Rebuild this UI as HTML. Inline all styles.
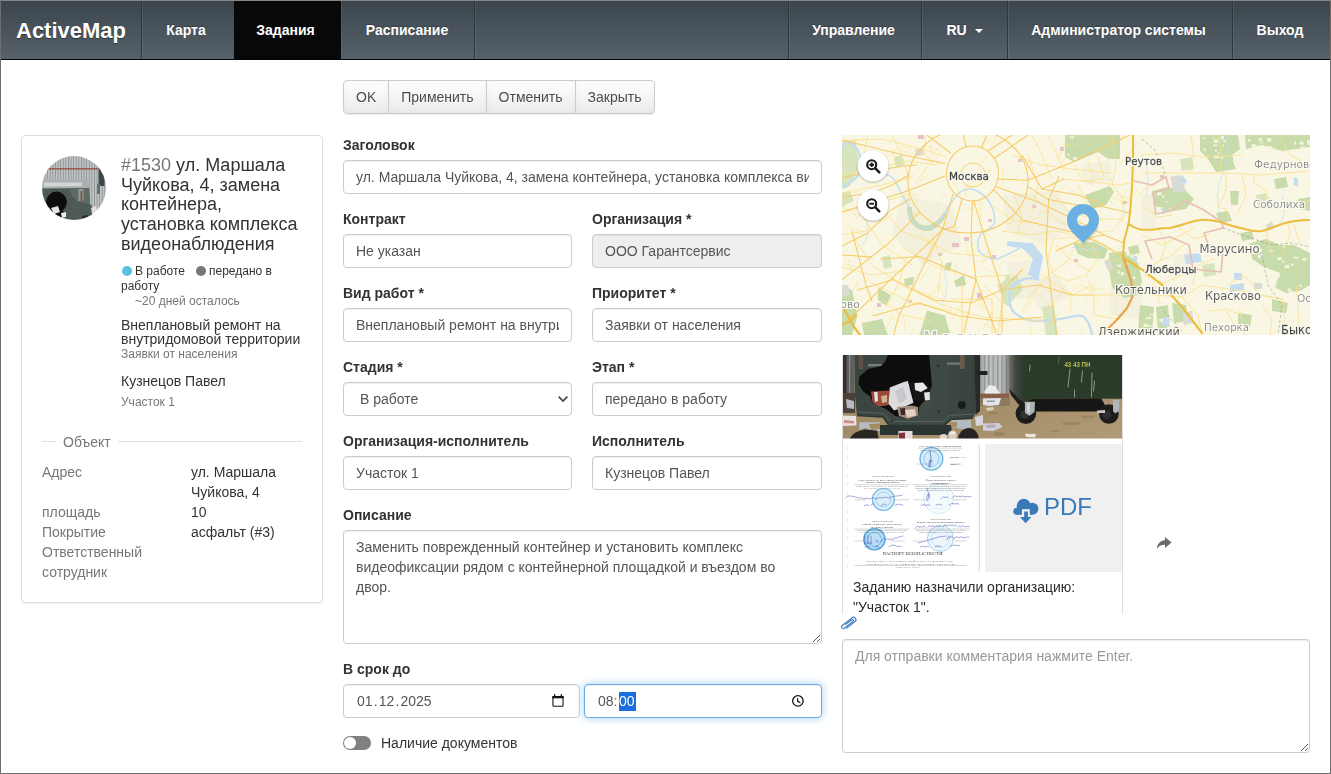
<!DOCTYPE html>
<html lang="ru">
<head>
<meta charset="utf-8">
<title>ActiveMap</title>
<style>
*{box-sizing:border-box}
html,body{margin:0;padding:0}
body{width:1331px;height:774px;overflow:hidden;position:relative;background:#fff;font-family:"Liberation Sans",sans-serif;font-size:14px;line-height:20px;color:#333}
.abs{position:absolute}
#frame{position:absolute;left:0;top:0;width:1331px;height:774px;border:1px solid #6e6e6e;border-top-color:#858585;pointer-events:none;z-index:100}
/* navbar */
#nav{position:absolute;left:1px;top:1px;width:1329px;height:59px;background:linear-gradient(#3b454c,#56626a);border-bottom:1px solid #050505}
#nav .it{position:absolute;top:0;height:58px;line-height:59px;color:#fff;font-weight:bold;font-size:14px;text-align:center;border-left:1px solid #2f373d;box-shadow:inset 1px 0 0 rgba(255,255,255,.08);text-shadow:0 -1px 0 rgba(0,0,0,.25);white-space:nowrap}
#nav .brand{position:absolute;left:0;top:0;height:58px;line-height:59px;width:140px;color:#fff;font-weight:bold;font-size:22px;padding-left:15px;text-shadow:0 1px 1px rgba(0,0,0,.4)}
#nav .act{background:#080808;box-shadow:none;border-left-color:#080808}
.caret{display:inline-block;width:0;height:0;margin-left:4px;vertical-align:middle;border-top:4px solid #fff;border-right:4px solid transparent;border-left:4px solid transparent}
/* buttons */
.btns{position:absolute;left:343px;top:80px;height:34px;display:flex;border-radius:4px;box-shadow:0 1px 1px rgba(0,0,0,.075)}
.btn{height:34px;line-height:32px;padding:0 12px;border:1px solid #ccc;margin-left:-1px;background:linear-gradient(#fff,#ebebeb);color:#4a4a4a;font-size:14px;text-shadow:0 1px 0 #fff;box-shadow:inset 0 0 6px rgba(0,0,0,.035)}
.btn:first-child{margin-left:0;border-radius:4px 0 0 4px}
.btn:last-child{border-radius:0 4px 4px 0;padding-right:13px}
/* form */
label.l{position:absolute;font-weight:bold;font-size:14px;line-height:20px;color:#333;white-space:nowrap}
.inp{position:absolute;height:34px;border:1px solid #ccc;border-radius:4px;background:#fff;box-shadow:inset 0 1px 1px rgba(0,0,0,.075);padding:0 12px;line-height:32px;font-size:14px;color:#555;white-space:nowrap;overflow:hidden}
.inp.dis{background:#eee}

/* left panel */
#lp{position:absolute;left:21px;top:135px;width:302px;height:468px;border:1px solid #ddd;border-radius:4px;box-shadow:0 1px 1px rgba(0,0,0,.05);background:#fff}
#lp .t{position:absolute;white-space:nowrap}
#lp h4{position:absolute;left:99px;top:19.6px;width:200px;white-space:nowrap;margin:0;font-size:18px;line-height:19.8px;font-weight:normal;color:#333}
#lp h4 span{color:#777}
.s12{font-size:12px;line-height:14px}
.s14{font-size:14px;line-height:20px}
.g{color:#777}
.dot{position:absolute;width:10px;height:10px;border-radius:50%}
.inp.foc{border-color:#66afe9;box-shadow:inset 0 1px 1px rgba(0,0,0,.075),0 0 8px rgba(102,175,233,.6)}
.sel{background:#1a6fe0;color:#fff;display:inline-block;line-height:19px;height:19px;margin-left:1.5px;padding-right:1.5px;vertical-align:baseline}
.dt{padding:0 1.15px}
.clip{overflow:hidden;white-space:nowrap;height:32px}
#main{position:absolute;left:0;top:0;width:1331px;height:774px;will-change:transform}
#lp .h4{left:99px;font-size:18px;line-height:20px;color:#333}
</style>
</head>
<body>
<div id="nav">
  <div class="brand">ActiveMap</div>
  <div class="it" style="left:140px;width:93px;padding-right:4px">Карта</div>
  <div class="it act" style="left:233px;width:107px;padding-right:5px">Задания</div>
  <div class="it" style="left:340px;width:134px;border-left:none;padding-right:2px">Расписание</div>
  <div class="it" style="left:473px;width:314px"></div>
  <div class="it" style="left:787px;width:133px;padding-right:3px">Управление</div>
  <div class="it" style="left:920px;width:86px">RU <span class="caret"></span></div>
  <div class="it" style="left:1006px;width:225px;padding-right:3px">Администратор системы</div>
  <div class="it" style="left:1231px;width:98px;padding-right:3px">Выход</div>
</div>

<div id="main">
<div class="btns"><div class="btn">OK</div><div class="btn">Применить</div><div class="btn">Отменить</div><div class="btn">Закрыть</div></div>

<div id="lp">
  <svg class="abs" style="left:20px;top:20px" width="64" height="64" viewBox="0 0 64 64"><defs><clipPath id="avc"><circle cx="32" cy="32" r="32"/></clipPath><filter id="avb" x="-5%" y="-5%" width="110%" height="110%"><feGaussianBlur stdDeviation="0.550"/></filter><pattern id="avf" width="2.600" height="8" patternUnits="userSpaceOnUse"><rect width="2.600" height="8" fill="#c0c3c4"/><rect width="0.900" height="8" fill="#8f9496"/></pattern></defs><g clip-path="url(#avc)"><g filter="url(#avb)"><rect x="-2" y="-2" width="68" height="68" fill="url(#avf)"/><rect x="4" y="12" width="52" height="1.600" fill="#9a5c57"/><rect x="56.500" y="10" width="6" height="20" fill="#3d4649"/><rect x="55" y="28" width="3" height="10" fill="#6b7174"/><path d="M-2 23 L46 23 L47 32 L-2 33z" fill="#aab1b1"/><path d="M2 26.500 L40 26.500 L40 30 L2 30.500z" fill="#d2d6d6"/><path d="M-2 32.500 L47 32 L48 48 L50 50 L50 66 L-2 66z" fill="#4d5a56"/><path d="M28 33 L47 32 L48 48 L36 46 L30 40z" fill="#5d6a66"/><rect x="36.500" y="33" width="5" height="12" fill="#9b9a92"/><rect x="38.500" y="35" width="1.800" height="12" fill="#6e5a4e"/><circle cx="14.500" cy="46" r="10.400" fill="#0e0e0e"/><path d="M8 50 L18 52 L24 58 L22 64 L6 60z" fill="#111"/><path d="M9 52 L16 50 L18 56 L12 58z" fill="#e4e4e4"/><path d="M19 57 L24 56 L24 61 L20 62z" fill="#ececec"/><path d="M49 52 L54 50 L56 56 L50 58z" fill="#e6dcd8"/><path d="M40 60 L46 59 L46 63 L40 64z" fill="#2a2f2e"/></g></g></svg>
  <div class="t h4" style="top:19px"><span class="g">#1530</span> ул. Маршала</div>
  <div class="t h4" style="top:39px">Чуйкова, 4, замена</div>
  <div class="t h4" style="top:58px">контейнера,</div>
  <div class="t h4" style="top:78px">установка комплекса</div>
  <div class="t h4" style="top:98px">видеонаблюдения</div>
  <div class="dot" style="left:100px;top:130px;background:#5bc0de"></div>
  <div class="t s12" style="left:113px;top:128px">В работе</div>
  <div class="dot" style="left:174px;top:130px;background:#777"></div>
  <div class="t s12" style="left:187px;top:128px">передано в</div>
  <div class="t s12" style="left:99px;top:143px">работу</div>
  <div class="t s12 g" style="left:113px;top:158px">~20 дней осталось</div>
  <div class="t s14" style="left:99px;top:182px;line-height:14px">Внеплановый ремонт на</div>
  <div class="t s14" style="left:99px;top:196px;line-height:14px">внутридомовой территории</div>
  <div class="t s12 g" style="left:99px;top:211px">Заявки от населения</div>
  <div class="t s14" style="left:99px;top:235px">Кузнецов Павел</div>
  <div class="t s12 g" style="left:99px;top:259px">Участок 1</div>
  <div class="abs" style="left:20px;top:305px;width:14px;height:1px;background:#e0e0e0"></div>
  <div class="abs" style="left:96px;top:305px;width:184px;height:1px;background:#e0e0e0"></div>
  <div class="t g" style="left:41px;top:296px;font-size:14px;line-height:20px">Объект</div>
  <div class="t s14 g" style="left:20px;top:326px">Адрес</div>
  <div class="t s14" style="left:169px;top:326px">ул. Маршала</div>
  <div class="t s14" style="left:169px;top:346px">Чуйкова, 4</div>
  <div class="t s14 g" style="left:20px;top:366px">площадь</div>
  <div class="t s14" style="left:169px;top:366px">10</div>
  <div class="t s14 g" style="left:20px;top:386px">Покрытие</div>
  <div class="t s14" style="left:169px;top:386px">асфальт (#3)</div>
  <div class="t s14 g" style="left:20px;top:406px">Ответственный</div>
  <div class="t s14 g" style="left:20px;top:426px">сотрудник</div>
</div>

<label class="l" style="left:343px;top:135px">Заголовок</label>
<div class="inp" style="left:343px;top:160px;width:479px"><div class="clip">ул. Маршала Чуйкова, 4, замена контейнера, установка комплекса видеонаблюдения</div></div>
<label class="l" style="left:343px;top:209px">Контракт</label>
<div class="inp" style="left:343px;top:234px;width:229px">Не указан</div>
<label class="l" style="left:592px;top:209px">Организация *</label>
<div class="inp dis" style="left:592px;top:234px;width:230px">ООО Гарантсервис</div>
<label class="l" style="left:343px;top:283px">Вид работ *</label>
<div class="inp" style="left:343px;top:308px;width:229px"><div class="clip">Внеплановый ремонт на внутридомовой территории</div></div>
<label class="l" style="left:592px;top:283px">Приоритет *</label>
<div class="inp" style="left:592px;top:308px;width:230px">Заявки от населения</div>
<label class="l" style="left:343px;top:357px">Стадия *</label>
<div class="inp" style="left:343px;top:382px;width:229px;padding-left:16px">В работе<svg class="abs" style="right:2.5px;top:11px" width="12" height="10" viewBox="0 0 12 10"><path d="M1.700 2.700 L6 7 L10.300 2.700" fill="none" stroke="#444" stroke-width="1.700"/></svg></div>
<label class="l" style="left:592px;top:357px">Этап *</label>
<div class="inp" style="left:592px;top:382px;width:230px">передано в работу</div>
<label class="l" style="left:343px;top:431px">Организация-исполнитель</label>
<div class="inp" style="left:343px;top:456px;width:229px">Участок 1</div>
<label class="l" style="left:592px;top:431px">Исполнитель</label>
<div class="inp" style="left:592px;top:456px;width:230px">Кузнецов Павел</div>
<label class="l" style="left:343px;top:505px">Описание</label>
<div class="inp" style="left:343px;top:530px;width:479px;height:114px;line-height:20px;padding:6px 12px;white-space:normal">Заменить поврежденный контейнер и установить комплекс<br>видеофиксации рядом с контейнерной площадкой и въездом во<br>двор.<svg class="abs" style="right:0;bottom:0" width="11" height="11" viewBox="0 0 11 11"><path d="M10 3 L3 10 M10 7 L7 10" stroke="#555" stroke-width="1" fill="none"/></svg></div>
<label class="l" style="left:343px;top:659px">В срок до</label>
<div class="inp" style="left:343px;top:684px;width:237px;padding-left:13px">01<span class="dt">.</span>12<span class="dt">.</span>2025<svg class="abs" style="left:208px;top:9px" width="12" height="14" viewBox="0 0 12 14"><rect x="0.950" y="2.500" width="10.100" height="9.800" rx="0.800" fill="none" stroke="#111" stroke-width="1.100"/><rect x="0.400" y="2" width="11.200" height="2.300" fill="#111"/><rect x="2" y="0.200" width="1.300" height="2.200" fill="#111"/><rect x="8.700" y="0.200" width="1.300" height="2.200" fill="#111"/></svg></div>
<div class="inp foc" style="left:584px;top:684px;width:238px;padding-left:13px">08<span style="color:#777">:</span><span class="sel">00</span><svg class="abs" style="left:206px;top:9px" width="15" height="15" viewBox="0 0 15 15"><circle cx="6.900" cy="6.900" r="5.250" fill="none" stroke="#111" stroke-width="1.300"/><path d="M6.600 4.200v3.100l2.800 1.500" fill="none" stroke="#111" stroke-width="1.200"/></svg></div>
<div class="abs" style="left:343px;top:736px;width:28px;height:14px;border-radius:7px;background:#808080"></div>
<div class="abs" style="left:344px;top:737px;width:12px;height:12px;border-radius:6px;background:#fff"></div>
<div class="abs" style="left:381px;top:733px;font-size:14px;line-height:20px;color:#333;white-space:nowrap">Наличие документов</div>

<svg class="abs" style="left:842px;top:135px" width="468" height="200" viewBox="0 0 468 200">
<defs><clipPath id="mc"><rect width="468" height="200"/></clipPath>
<filter id="mb" x="-5%" y="-5%" width="110%" height="110%"><feGaussianBlur stdDeviation="0.4"/></filter>
<filter id="sh" x="-30%" y="-30%" width="160%" height="160%"><feGaussianBlur stdDeviation="1.2"/></filter>
<filter id="halo" x="-10%" y="-30%" width="120%" height="160%"><feMorphology in="SourceAlpha" operator="dilate" radius="1.1" result="d"/><feGaussianBlur in="d" stdDeviation="0.5" result="b"/><feFlood flood-color="#fbfaf0" flood-opacity="0.95"/><feComposite in2="b" operator="in" result="h"/><feMerge><feMergeNode in="h"/><feMergeNode in="h"/><feMergeNode in="SourceGraphic"/></feMerge></filter></defs>
<g clip-path="url(#mc)">
<rect width="468" height="200" fill="#f9f7e4"/>
<g filter="url(#mb)">
<g fill="#f3f0dd">
<path d="M60 60 L110 70 L120 110 L80 130 L50 100z"/>
<path d="M160 60 L215 55 L235 90 L200 110 L165 95z"/>
<path d="M268 150 L300 150 L300 185 L268 180z"/>
<path d="M330 120 L350 118 L352 140 L332 142z"/>
<path d="M165 128 L195 124 L200 160 L170 165z"/>
<path d="M238 30 L268 26 L270 46 L244 50z"/>
<path d="M180 150 L214 140 L230 160 L200 176z"/>
<path d="M300 60 L312 58 L314 92 L300 94z"/>
</g>
<path d="M223 0 L278 0 L278 24 L266 24 L256 17 L232 27 L223 22z" fill="#c7dbab"/>
<path d="M243 60 L268 51 L272 57 L264 70 L250 74z" fill="#c7dbab"/>
<path d="M231 108 L252 107 L266 114 L262 124 L246 123 L236 119z" fill="#c7dbab"/>
<path d="M267 118 L282 116 L296 128 L300 146 L296 160 L282 163 L270 152 L267 134z" fill="#c7dbab"/>
<path d="M0 5 L13 5 L18 31 L7.7 51.6 L0 54z" fill="#d6e5bd"/>
<path d="M0 58 L8 56 L12 66 L0 72z" fill="#d6e5bd"/>
<path d="M65 72 Q66 86 71 90 Q80 98 89 95.5 Q99 91 105 79 L102 77 Q97 86 88 90 Q80 92 74.5 86.500 Q70.5 83 69.500 72z" fill="#c7dbab"/>
<path d="M85 175.6 L103 180.8 L108.5 200 L77.5 200z" fill="#c7dbab"/>
<path d="M155 150 L175.6 139.5 L180.8 155 L165.300 170.500z" fill="#d6e5bd"/>
<path d="M0 150 L10 155 L15.5 180.8 L10 200 L0 200z" fill="#c7dbab"/>
<path d="M20 188 L40 184 L46 200 L22 200z" fill="#c7dbab"/>
<path d="M36 152.4 L49 160 L44 170.5 L36 165z" fill="#c7dbab"/>
<path d="M40 122 L48 120 L50 132 L42 134z" fill="#d6e5bd"/>
<path d="M62 144 L72 142 L71 150 L63 151z" fill="#c7dbab"/>
<path d="M104 128 L110 127 L108 136 L102 135z" fill="#c7dbab"/>
<path d="M112 146 L122 140 L124 150 L114 152z" fill="#c7dbab"/>
<path d="M52 22 L60 20 L62 30 L54 32z" fill="#d6e5bd"/>
<path d="M358 0 L396 0 L398 14 L390 20 L394 34 L374 37 L366 24 L358 16z" fill="#c7dbab"/>
<path d="M403 0 L468 0 L468 12 L440 16 L420 10 L404 14z" fill="#c7dbab"/>
<path d="M310 56 L326 52 L344 56 L352 64 L344 74 L326 77 L312 70z" fill="#c7dbab"/>
<path d="M388 56 L397 56 L396 70 L389 70z" fill="#c7dbab"/>
<path d="M374 78 L386 76 L390 86 L378 88z" fill="#c7dbab"/>
<path d="M398 98 L410 96 L412 104 L400 106z" fill="#c7dbab"/>
<path d="M432 44 L444 42 L446 52 L434 54z" fill="#c7dbab"/>
<path d="M408 108 L424 104 L438 110 L452 110 L468 118 L468 150 L458 156 L444 158 L432 152 L438 138 L422 132 L410 124z" fill="#c7dbab"/>
<path d="M430 164 L446 168 L444 178 L430 176z" fill="#c7dbab"/>
<path d="M330 168 L344 170 L346 186 L332 188z" fill="#c7dbab"/>
<path d="M314 172 L326 170 L328 196 L316 196z" fill="#c7dbab"/>
<path d="M298 170 L312 172 L310 198 L296 196z" fill="#c7dbab"/>
<path d="M396 178 L410 180 L408 192 L396 190z" fill="#c7dbab"/>
<path d="M456 64 L468 62 L468 76 L458 74z" fill="#c7dbab"/>
<path d="M200 172 L212 170 L216 200 L204 200z" fill="#d6e5bd"/>
<path d="M160 150 L166 138 L171 150 L168 172 L161 168z" fill="#d6e5bd"/>
<path d="M286 112 L296 110 L298 118 L288 120z" fill="#c7dbab"/>
<path d="M414 60 L424 58 L426 70 L416 72z" fill="#d6e5bd"/>
<path d="M338 24 L350 22 L352 34 L340 36z" fill="#d6e5bd"/>
<path d="M360 130 L372 128 L374 140 L362 142z" fill="#d6e5bd"/>
<g fill="#f4f3df">
<rect x="427.4" y="115.2" width="3.8" height="1.4"/>
<rect x="440.2" y="125.6" width="1.7" height="2.4"/>
<rect x="410.2" y="128.8" width="1.7" height="1.4"/>
<rect x="433.5" y="147.7" width="1.9" height="1.7"/>
<rect x="445.6" y="153.5" width="3.5" height="2.1"/>
<rect x="466.6" y="110.2" width="4.5" height="1.9"/>
<rect x="416.7" y="113.7" width="2.6" height="3.1"/>
<rect x="418.8" y="135.9" width="3.7" height="2.1"/>
<rect x="440.9" y="111.0" width="1.7" height="1.7"/>
<rect x="448.8" y="128.5" width="2.6" height="2.5"/>
<rect x="435.2" y="122.4" width="4.3" height="2.8"/>
<rect x="422.6" y="135.6" width="3.3" height="3.2"/>
<rect x="451.8" y="121.8" width="4.9" height="1.5"/>
<rect x="433.1" y="144.3" width="2.0" height="2.3"/>
<rect x="410.4" y="140.1" width="4.2" height="2.5"/>
<rect x="460.5" y="123.1" width="3.9" height="2.6"/>
<rect x="442.8" y="129.9" width="4.4" height="3.4"/>
<rect x="436.4" y="139.9" width="1.7" height="2.8"/>
<rect x="446.8" y="155.7" width="4.4" height="1.9"/>
<rect x="431.1" y="140.1" width="1.6" height="2.3"/>
<rect x="418.1" y="113.6" width="1.7" height="3.0"/>
<rect x="415.8" y="119.9" width="2.9" height="3.2"/>
<rect x="412.8" y="129.6" width="3.4" height="3.2"/>
<rect x="457.2" y="149.5" width="2.5" height="2.2"/>
<rect x="429.5" y="150.4" width="4.9" height="1.5"/>
<rect x="418.6" y="119.1" width="2.3" height="2.3"/>
<rect x="380.4" y="9.5" width="1.5" height="2.2"/>
<rect x="372.0" y="20.4" width="4.8" height="2.8"/>
<rect x="377.6" y="22.2" width="3.9" height="1.3"/>
<rect x="392.2" y="28.1" width="4.6" height="3.0"/>
<rect x="372.9" y="14.4" width="1.9" height="2.7"/>
<rect x="360.4" y="2.4" width="2.2" height="1.6"/>
<rect x="370.9" y="1.9" width="1.5" height="1.5"/>
<rect x="361.9" y="13.1" width="1.6" height="3.2"/>
<rect x="381.3" y="5.3" width="2.4" height="2.0"/>
<rect x="371.8" y="4.4" width="4.5" height="3.5"/>
<rect x="375.7" y="17.4" width="1.8" height="1.4"/>
<rect x="371.0" y="9.5" width="4.4" height="1.6"/>
<rect x="358.9" y="34.2" width="3.3" height="1.5"/>
<rect x="378.6" y="1.0" width="3.3" height="3.5"/>
<rect x="390.8" y="25.1" width="2.4" height="2.0"/>
<rect x="364.3" y="27.8" width="3.4" height="3.0"/>
<rect x="425.1" y="3.1" width="4.3" height="3.5"/>
<rect x="458.6" y="11.3" width="4.4" height="2.9"/>
<rect x="418.5" y="7.2" width="2.7" height="1.3"/>
<rect x="405.8" y="3.9" width="2.4" height="2.8"/>
<rect x="465.2" y="6.3" width="4.8" height="3.5"/>
<rect x="465.1" y="5.1" width="2.3" height="1.7"/>
<rect x="416.6" y="2.9" width="3.7" height="3.3"/>
<rect x="457.8" y="6.7" width="3.8" height="3.0"/>
<rect x="409.4" y="9.2" width="4.7" height="3.0"/>
<rect x="452.0" y="6.7" width="2.1" height="3.0"/>
<rect x="425.3" y="11.2" width="4.9" height="2.1"/>
<rect x="429.7" y="13.3" width="4.0" height="1.6"/>
<rect x="315.1" y="57.3" width="4.7" height="3.1"/>
<rect x="315.8" y="72.2" width="4.9" height="2.7"/>
<rect x="324.0" y="66.1" width="2.0" height="1.2"/>
<rect x="348.8" y="68.3" width="3.3" height="3.3"/>
<rect x="327.4" y="73.2" width="4.4" height="1.7"/>
<rect x="320.1" y="60.4" width="2.3" height="2.5"/>
<rect x="275.6" y="135.6" width="2.0" height="3.3"/>
<rect x="278.7" y="137.2" width="3.5" height="3.3"/>
<rect x="280.9" y="156.5" width="3.3" height="2.4"/>
<rect x="284.3" y="118.8" width="3.0" height="1.6"/>
<rect x="267.1" y="151.6" width="2.1" height="2.3"/>
<rect x="290.9" y="141.4" width="2.6" height="2.4"/>
<rect x="285.3" y="150.9" width="1.9" height="2.5"/>
<rect x="275.2" y="129.6" width="4.2" height="2.4"/>
<rect x="325.0" y="191.3" width="4.7" height="2.2"/>
<rect x="327.4" y="184.2" width="3.3" height="2.8"/>
<rect x="319.7" y="184.9" width="3.2" height="3.4"/>
<rect x="331.6" y="194.5" width="4.8" height="1.8"/>
<rect x="324.9" y="196.4" width="4.4" height="1.5"/>
<rect x="303.8" y="182.4" width="1.8" height="1.8"/>
<rect x="301.5" y="188.7" width="4.2" height="3.3"/>
<rect x="305.4" y="190.1" width="3.8" height="1.5"/>
<rect x="340.4" y="197.1" width="2.3" height="3.4"/>
<rect x="317.1" y="183.6" width="5.0" height="3.1"/>
<rect x="305.8" y="182.1" width="3.3" height="2.0"/>
<rect x="307.4" y="178.9" width="4.0" height="1.2"/>
<rect x="324.6" y="182.3" width="1.6" height="2.0"/>
<rect x="327.9" y="184.3" width="1.7" height="3.5"/>
<rect x="266.4" y="23.3" width="1.9" height="1.8"/>
<rect x="225.2" y="18.7" width="2.4" height="1.5"/>
<rect x="246.2" y="21.9" width="4.4" height="1.8"/>
<rect x="231.2" y="22.1" width="3.5" height="2.8"/>
<rect x="227.9" y="1.4" width="3.9" height="2.2"/>
</g>
<g fill="#d9dbd4"><path d="M328 42 L338 40 L344 56 L332 58z"/><path d="M73 14 L81 13 L82 20 L74 21z"/><path d="M0 150 L6 150 L8 160 L0 162z"/><path d="M340 178 L350 176 L352 188 L342 190z"/><path d="M412 148 L420 148 L420 154 L412 154z"/><path d="M424 90 L430 86 L432 94 L426 96z"/><path d="M262 126 L268 124 L272 134 L266 136z"/></g>
<g fill="#e3c3c9">
<rect x="76" y="0" width="6" height="4"/>
<rect x="110" y="108" width="7" height="4"/>
<rect x="122" y="102" width="5" height="4"/>
<rect x="35" y="168" width="4" height="4"/>
<rect x="66" y="165" width="4" height="3"/>
<rect x="218" y="12" width="4" height="4"/>
<rect x="135" y="158" width="5" height="5"/>
<rect x="281" y="66" width="4" height="3"/>
<rect x="232" y="124" width="4" height="3"/>
<rect x="96" y="118" width="4" height="3"/>
<rect x="150" y="120" width="4" height="3"/>
<rect x="20" y="30" width="4" height="4"/>
<rect x="190" y="70" width="4" height="3"/>
<rect x="176" y="24" width="4" height="3"/>
<rect x="318" y="40" width="4" height="3"/>
<rect x="146" y="84" width="4" height="3"/>
</g>
<g fill="none" stroke="#c4dcf1" stroke-linecap="round" stroke-linejoin="round">
<path d="M0 13 Q4 6 7.7 7.7 Q16 12 18 20.7 Q19 34 15.5 41.3 Q8 50 0 51.6" stroke-width="2.4"/>
<path d="M30 40 Q44 36 52 44 Q58 56 67 72.3 Q68 84 72.3 87.8 Q80 95 87.8 93 Q98 88 103.3 77.5 Q108 68 113.6 62 Q118 56 124 54.2" stroke-width="1.5"/>
<path d="M124 54.2 Q130 53 134.3 55.5 Q143 60 147.2 67 Q154 78 152.4 87.8 Q148 95 139.5 98 Q134 106 137 116.2 Q144 124 155 124 Q170 118 180.8 111 L191 108.5" stroke-width="1.5"/>
<path d="M196.3 144.6 Q188 142 180.8 144.6 Q170 148 167.9 155 Q166 168 170.5 175.6 Q178 184 191 186 Q212 186 234 180.8 Q246 178 250 200" stroke-width="2.4"/>
<path d="M230 112 Q246 118 262 112" stroke-width="1"/>
<path d="M300 20 Q310 40 304 60" stroke-width="0.7"/>
<path d="M384 0 Q390 20 380 40 Q372 60 378 80" stroke-width="0.7"/>
<path d="M440 60 Q446 80 436 92" stroke-width="0.7"/>
<path d="M20 60 Q30 70 24 84 Q30 100 20 110" stroke-width="0.7"/>
<path d="M100 130 Q110 150 100 170" stroke-width="0.6"/>
</g>
<g fill="#c4dcf1"><path d="M165.3 105.9 L191 108.5 L201.4 121.4 L196.3 144.600 L186 139.500 L191 124 L180.800 113.600 L165.300 111z"/><path d="M342 120 L358 118 L360 127 L344 129z"/><path d="M392 138 L400 138 L400 145 L392 145z"/><path d="M388 150 L402 148 L402 155 L388 157z"/><path d="M340 40 L345 46 L342 50 L338 44z"/><path d="M318 72 L324 76 L322 80z"/><path d="M290 120 L296 122 L294 128z"/><path d="M452 42 L456 44 L456 52 L452 50z"/><path d="M322 182 L328 184 L326 192 L320 190z"/></g>
<g fill="none" stroke="#fbe08a" stroke-width="0.8" stroke-linecap="round" stroke-linejoin="round">
<path d="M0 6 L40 4 L80 14 L104 22"/>
<path d="M0 40 L30 34 L64 26 L96 30"/>
<path d="M0 58 L40 50 L70 42"/>
<path d="M0 76 L30 70 L70 58"/>
<path d="M26 0 L22 20 L40 40"/>
<path d="M50 0 L60 20 L66 40"/>
<path d="M84 0 L82 18 L92 30"/>
<path d="M10 100 L30 130 L60 150 L100 170 L140 182 L200 186"/>
<path d="M0 132 L30 140 L60 136"/>
<path d="M30 148 L70 168 L110 176"/>
<path d="M60 112 L90 130 L130 142 L170 140"/>
<path d="M76 100 L108 118 L150 122"/>
<path d="M120 150 L120 200"/>
<path d="M108 164 L150 164 L150 200"/>
<path d="M142 150 L160 168 L156 200"/>
<path d="M170 20 L200 30 L230 34 L270 38"/>
<path d="M190 0 L200 20 L210 44"/>
<path d="M206 0 L222 36"/>
<path d="M232 30 L240 46 L262 44"/>
<path d="M246 26 L252 46"/>
<path d="M256 22 L262 42"/>
<path d="M222 44 L276 50 L288 48"/>
<path d="M270 0 L274 30 L270 50 L280 62 L282 80 L274 92"/>
<path d="M212 104 L236 102 L252 112 L256 124 L244 140 L226 146 L212 140 L206 124z"/>
<path d="M228 124 L206 140 L190 160 L180 176"/>
<path d="M228 124 L250 138"/>
<path d="M228 124 L214 110"/>
<path d="M200 140 L230 160 L250 150"/>
<path d="M252 160 L282 160 L300 150"/>
<path d="M252 160 L252 180 L276 184"/>
<path d="M160 96 L190 100 L214 96 L250 104"/>
<path d="M172 60 L180 80 L176 100"/>
<path d="M190 60 L214 84 L244 100 L272 116"/>
<path d="M300 20 L330 18 L360 22 L400 20"/>
<path d="M296 60 L312 48"/>
<path d="M300 100 L320 110 L340 100 L352 92"/>
<path d="M310 130 L330 120 L344 108"/>
<path d="M302 140 L322 148 L340 140"/>
<path d="M310 160 L340 162 L360 150 L400 156 L440 164"/>
<path d="M340 162 L356 180 L360 200"/>
<path d="M386 150 L400 140 L410 148 L416 160 L440 164"/>
<path d="M384 176 L396 196"/>
<path d="M398 176 L402 200"/>
<path d="M368 176 L384 174 L400 180"/>
<path d="M440 164 L444 200"/>
<path d="M454 150 L458 200"/>
<path d="M349 0 L352 20 L348 38"/>
<path d="M376 0 L380 20 L378 38"/>
<path d="M384 38 L384 56 L376 72 L384 74 L386 86"/>
<path d="M412 40 L412 48 L424 56 L428 68"/>
<path d="M436 0 L448 20 L460 26"/>
<path d="M440 120 L448 100 L446 90"/>
<path d="M420 170 L430 184 L428 200"/>
<path d="M300 38 L340 38 L384 38 L420 40 L468 36"/>
<path d="M20 80 L40 110 L70 130"/>
<path d="M36 70 L60 96 L96 112"/>
<path d="M0 100 L24 96 L50 80"/>
<path d="M90 100 L100 128 L96 158"/>
<path d="M40 164 L60 180 L90 186"/>
<path d="M64 124 L56 150 L44 172"/>
<path d="M186 20 L196 50 L190 76"/>
<path d="M150 70 L172 86 L196 88"/>
<path d="M212 60 L226 76 L250 84 L280 84"/>
<path d="M236 50 L246 70 L262 88"/>
<path d="M300 70 L316 82 L330 80"/>
<path d="M316 92 L324 110 L318 126"/>
<path d="M336 92 L352 104 L366 100"/>
<path d="M312 148 L318 168"/>
<path d="M350 150 L356 130 L372 124"/>
<path d="M420 60 L440 70 L468 66"/>
<path d="M400 40 L404 60 L396 78"/>
<path d="M424 96 L430 120"/>
<path d="M452 90 L458 108"/>
<path d="M21.4 187.7 l6.7 6.3" stroke-width="0.6" opacity="0.8"/>
<path d="M253.4 13.3 l10.7 7.0" stroke-width="0.6" opacity="0.8"/>
<path d="M163.7 185.3 l-5.5 6.6" stroke-width="0.6" opacity="0.8"/>
<path d="M210.0 187.6 l5.5 -9.0" stroke-width="0.6" opacity="0.8"/>
<path d="M275.9 125.7 l11.7 2.7" stroke-width="0.6" opacity="0.8"/>
<path d="M148.0 35.6 l-15.4 15.6" stroke-width="0.6" opacity="0.8"/>
<path d="M10.9 3.7 l10.6 1.3" stroke-width="0.6" opacity="0.8"/>
<path d="M140.5 186.9 l13.3 10.7" stroke-width="0.6" opacity="0.8"/>
<path d="M194.3 109.2 l-0.8 12.3" stroke-width="0.6" opacity="0.8"/>
<path d="M63.7 45.9 l13.3 -12.0" stroke-width="0.6" opacity="0.8"/>
<path d="M188.2 80.9 l-15.1 12.7" stroke-width="0.6" opacity="0.8"/>
<path d="M4.2 125.1 l-4.9 7.3" stroke-width="0.6" opacity="0.8"/>
<path d="M196.9 76.2 l11.7 2.2" stroke-width="0.6" opacity="0.8"/>
<path d="M71.7 58.6 l3.8 11.1" stroke-width="0.6" opacity="0.8"/>
<path d="M1.1 72.8 l-11.9 10.2" stroke-width="0.6" opacity="0.8"/>
<path d="M72.4 193.1 l-5.0 9.3" stroke-width="0.6" opacity="0.8"/>
<path d="M99.3 16.8 l-6.4 8.7" stroke-width="0.6" opacity="0.8"/>
<path d="M149.4 1.0 l-7.1 7.1" stroke-width="0.6" opacity="0.8"/>
<path d="M173.7 78.8 l-5.7 9.7" stroke-width="0.6" opacity="0.8"/>
<path d="M173.3 105.8 l12.3 -13.2" stroke-width="0.6" opacity="0.8"/>
<path d="M260.2 77.9 l-10.1 11.0" stroke-width="0.6" opacity="0.8"/>
<path d="M84.1 123.7 l8.4 -17.8" stroke-width="0.6" opacity="0.8"/>
<path d="M264.0 125.5 l15.3 -1.2" stroke-width="0.6" opacity="0.8"/>
<path d="M149.3 167.0 l11.7 11.2" stroke-width="0.6" opacity="0.8"/>
<path d="M264.3 136.6 l3.8 -7.7" stroke-width="0.6" opacity="0.8"/>
<path d="M188.6 191.9 l0.0 15.8" stroke-width="0.6" opacity="0.8"/>
<path d="M185.8 125.2 l5.0 -6.3" stroke-width="0.6" opacity="0.8"/>
<path d="M236.1 149.7 l8.9 2.7" stroke-width="0.6" opacity="0.8"/>
<path d="M155.7 149.1 l2.6 8.7" stroke-width="0.6" opacity="0.8"/>
<path d="M78.6 145.9 l8.7 -14.7" stroke-width="0.6" opacity="0.8"/>
<path d="M136.3 169.1 l14.6 9.8" stroke-width="0.6" opacity="0.8"/>
<path d="M227.0 123.4 l4.5 -9.0" stroke-width="0.6" opacity="0.8"/>
<path d="M75.2 148.6 l-6.3 7.6" stroke-width="0.6" opacity="0.8"/>
<path d="M142.8 97.2 l13.4 11.2" stroke-width="0.6" opacity="0.8"/>
<path d="M86.1 103.3 l3.5 18.4" stroke-width="0.6" opacity="0.8"/>
<path d="M294.0 109.8 l-16.1 13.6" stroke-width="0.6" opacity="0.8"/>
<path d="M5.2 91.8 l13.5 4.7" stroke-width="0.6" opacity="0.8"/>
<path d="M79.5 42.0 l4.1 -8.3" stroke-width="0.6" opacity="0.8"/>
<path d="M221.3 52.4 l-8.4 17.6" stroke-width="0.6" opacity="0.8"/>
<path d="M150.6 177.4 l-9.8 18.1" stroke-width="0.6" opacity="0.8"/>
<path d="M143.9 5.0 l11.9 12.9" stroke-width="0.6" opacity="0.8"/>
<path d="M120.0 145.4 l3.1 12.0" stroke-width="0.6" opacity="0.8"/>
<path d="M248.7 0.3 l-6.9 6.8" stroke-width="0.6" opacity="0.8"/>
<path d="M274.2 142.6 l-4.3 7.8" stroke-width="0.6" opacity="0.8"/>
<path d="M115.5 174.0 l12.1 7.1" stroke-width="0.6" opacity="0.8"/>
<path d="M81.4 9.7 l16.1 6.3" stroke-width="0.6" opacity="0.8"/>
<path d="M187.9 29.8 l-7.0 10.3" stroke-width="0.6" opacity="0.8"/>
<path d="M228.9 157.0 l-0.4 19.4" stroke-width="0.6" opacity="0.8"/>
<path d="M186.7 182.7 l17.9 2.2" stroke-width="0.6" opacity="0.8"/>
<path d="M14.6 146.5 l1.1 9.9" stroke-width="0.6" opacity="0.8"/>
<path d="M257.4 97.1 l14.6 -1.3" stroke-width="0.6" opacity="0.8"/>
<path d="M101.7 59.6 l-6.2 9.5" stroke-width="0.6" opacity="0.8"/>
<path d="M143.0 133.8 l9.3 4.3" stroke-width="0.6" opacity="0.8"/>
<path d="M61.5 181.2 l2.1 14.2" stroke-width="0.6" opacity="0.8"/>
<path d="M98.5 151.8 l3.7 10.0" stroke-width="0.6" opacity="0.8"/>
<path d="M26.9 68.4 l11.5 6.4" stroke-width="0.6" opacity="0.8"/>
<path d="M239.6 40.4 l10.3 9.1" stroke-width="0.6" opacity="0.8"/>
<path d="M122.5 104.8 l5.2 17.8" stroke-width="0.6" opacity="0.8"/>
<path d="M147.5 114.9 l-6.4 13.6" stroke-width="0.6" opacity="0.8"/>
<path d="M186.4 172.6 l9.3 -18.4" stroke-width="0.6" opacity="0.8"/>
<path d="M113.8 129.2 l-1.1 19.9" stroke-width="0.6" opacity="0.8"/>
<path d="M258.4 4.4 l15.8 10.0" stroke-width="0.6" opacity="0.8"/>
<path d="M238.1 193.7 l5.5 12.3" stroke-width="0.6" opacity="0.8"/>
<path d="M274.3 165.1 l-0.7 11.5" stroke-width="0.6" opacity="0.8"/>
<path d="M32.3 30.9 l9.0 3.1" stroke-width="0.6" opacity="0.8"/>
<path d="M244.3 140.2 l7.0 17.5" stroke-width="0.6" opacity="0.8"/>
<path d="M0.4 25.1 l16.2 5.2" stroke-width="0.6" opacity="0.8"/>
<path d="M89.9 25.6 l-8.5 11.3" stroke-width="0.6" opacity="0.8"/>
<path d="M226.1 19.9 l-9.7 12.9" stroke-width="0.6" opacity="0.8"/>
<path d="M114.9 44.7 l15.4 -2.3" stroke-width="0.6" opacity="0.8"/>
<path d="M294.9 55.7 l-13.1 15.6" stroke-width="0.6" opacity="0.8"/>
<path d="M140.7 47.0 l5.8 -12.5" stroke-width="0.6" opacity="0.8"/>
<path d="M192.3 11.1 l10.8 -13.7" stroke-width="0.6" opacity="0.8"/>
<path d="M124.3 51.5 l-0.5 11.2" stroke-width="0.6" opacity="0.8"/>
<path d="M10.1 67.6 l3.2 13.2" stroke-width="0.6" opacity="0.8"/>
<path d="M2.0 58.4 l14.8 -1.7" stroke-width="0.6" opacity="0.8"/>
<path d="M59.3 153.2 l5.7 -9.5" stroke-width="0.6" opacity="0.8"/>
<path d="M225.1 59.0 l10.6 1.0" stroke-width="0.6" opacity="0.8"/>
<path d="M66.1 83.4 l6.8 7.4" stroke-width="0.6" opacity="0.8"/>
<path d="M116.5 42.6 l8.7 -0.7" stroke-width="0.6" opacity="0.8"/>
<path d="M17.8 78.7 l-14.9 16.1" stroke-width="0.6" opacity="0.8"/>
<path d="M275.8 65.8 l10.4 -11.3" stroke-width="0.6" opacity="0.8"/>
<path d="M138.4 62.4 l0.0 21.8" stroke-width="0.6" opacity="0.8"/>
<path d="M131.0 21.8 l11.4 6.1" stroke-width="0.6" opacity="0.8"/>
<path d="M282.8 24.7 l10.8 -15.4" stroke-width="0.6" opacity="0.8"/>
<path d="M91.4 160.8 l13.6 5.4" stroke-width="0.6" opacity="0.8"/>
<path d="M110.3 183.9 l10.1 -15.3" stroke-width="0.6" opacity="0.8"/>
<path d="M140.5 126.3 l13.8 -12.7" stroke-width="0.6" opacity="0.8"/>
<path d="M12.0 7.0 l6.5 6.1" stroke-width="0.6" opacity="0.8"/>
<path d="M57.7 12.6 l11.8 0.2" stroke-width="0.6" opacity="0.8"/>
<path d="M283.5 123.4 l-12.1 12.9" stroke-width="0.6" opacity="0.8"/>
<path d="M273.6 59.5 l16.1 5.1" stroke-width="0.6" opacity="0.8"/>
<path d="M279.2 4.9 l8.2 -16.0" stroke-width="0.6" opacity="0.8"/>
<path d="M137.9 155.3 l-14.4 13.0" stroke-width="0.6" opacity="0.8"/>
<path d="M39.3 99.3 l13.4 12.5" stroke-width="0.6" opacity="0.8"/>
<path d="M243.5 154.6 l20.0 -0.6" stroke-width="0.6" opacity="0.8"/>
<path d="M136.4 156.8 l10.7 -1.2" stroke-width="0.6" opacity="0.8"/>
<path d="M222.9 49.5 l11.5 9.2" stroke-width="0.6" opacity="0.8"/>
<path d="M161.2 32.1 l-0.5 21.8" stroke-width="0.6" opacity="0.8"/>
<path d="M78.4 16.8 l18.5 11.6" stroke-width="0.6" opacity="0.8"/>
<path d="M287.7 34.6 l9.8 -13.5" stroke-width="0.6" opacity="0.8"/>
<path d="M199.5 149.6 l8.9 8.2" stroke-width="0.6" opacity="0.8"/>
<path d="M82.7 53.5 l-7.3 7.9" stroke-width="0.6" opacity="0.8"/>
<path d="M73.2 49.1 l11.0 -17.5" stroke-width="0.6" opacity="0.8"/>
<path d="M55.7 13.0 l-11.6 9.7" stroke-width="0.6" opacity="0.8"/>
<path d="M68.5 161.7 l-0.7 9.4" stroke-width="0.6" opacity="0.8"/>
<path d="M140.5 163.8 l-0.3 8.6" stroke-width="0.6" opacity="0.8"/>
<path d="M86.9 23.8 l12.9 -14.7" stroke-width="0.6" opacity="0.8"/>
<path d="M57.5 15.0 l13.7 4.0" stroke-width="0.6" opacity="0.8"/>
<path d="M76.9 155.6 l15.0 6.4" stroke-width="0.6" opacity="0.8"/>
<path d="M183.5 43.5 l-4.5 7.4" stroke-width="0.6" opacity="0.8"/>
<path d="M296.0 7.6 l14.3 -13.2" stroke-width="0.6" opacity="0.8"/>
<path d="M121.1 74.4 l10.8 0.1" stroke-width="0.6" opacity="0.8"/>
<path d="M235.4 109.6 l16.3 10.1" stroke-width="0.6" opacity="0.8"/>
<path d="M196.6 30.9 l10.2 -1.1" stroke-width="0.6" opacity="0.8"/>
<path d="M205.8 82.0 l-9.1 10.5" stroke-width="0.6" opacity="0.8"/>
<path d="M15.2 149.1 l-4.6 6.9" stroke-width="0.6" opacity="0.8"/>
<path d="M226.9 160.4 l7.9 -11.2" stroke-width="0.6" opacity="0.8"/>
<path d="M278.8 86.8 l11.5 -15.7" stroke-width="0.6" opacity="0.8"/>
<path d="M120.2 176.6 l0.3 9.8" stroke-width="0.6" opacity="0.8"/>
<path d="M15.3 28.5 l6.1 15.5" stroke-width="0.6" opacity="0.8"/>
<path d="M109.8 100.9 l5.8 -8.5" stroke-width="0.6" opacity="0.8"/>
<path d="M50.8 13.4 l3.4 19.0" stroke-width="0.6" opacity="0.8"/>
<path d="M286.2 39.5 l6.4 -5.7" stroke-width="0.6" opacity="0.8"/>
<path d="M270.2 62.9 l12.8 4.1" stroke-width="0.6" opacity="0.8"/>
<path d="M267.6 124.1 l13.5 -14.8" stroke-width="0.6" opacity="0.8"/>
<path d="M183.8 122.9 l7.8 -7.1" stroke-width="0.6" opacity="0.8"/>
<path d="M64.6 79.9 l13.0 -0.9" stroke-width="0.6" opacity="0.8"/>
<path d="M44.2 194.1 l6.8 -14.4" stroke-width="0.6" opacity="0.8"/>
<path d="M224.2 7.6 l-7.0 14.8" stroke-width="0.6" opacity="0.8"/>
<path d="M162.8 125.4 l-8.0 9.4" stroke-width="0.6" opacity="0.8"/>
<path d="M73.8 77.8 l-8.0 11.6" stroke-width="0.6" opacity="0.8"/>
<path d="M6.9 123.8 l2.7 14.0" stroke-width="0.6" opacity="0.8"/>
<path d="M183.1 163.8 l10.0 -9.2" stroke-width="0.6" opacity="0.8"/>
<path d="M19.9 71.7 l-5.9 12.9" stroke-width="0.6" opacity="0.8"/>
<path d="M151.0 8.2 l8.1 -16.4" stroke-width="0.6" opacity="0.8"/>
<path d="M230.2 102.3 l15.4 13.6" stroke-width="0.6" opacity="0.8"/>
<path d="M193.2 156.8 l15.6 15.4" stroke-width="0.6" opacity="0.8"/>
<path d="M216.7 163.0 l9.5 -18.0" stroke-width="0.6" opacity="0.8"/>
<path d="M85.2 162.2 l12.5 -13.1" stroke-width="0.6" opacity="0.8"/>
<path d="M65.5 166.6 l10.0 2.3" stroke-width="0.6" opacity="0.8"/>
<path d="M265.4 55.0 l5.1 14.1" stroke-width="0.6" opacity="0.8"/>
<path d="M272.3 41.7 l-7.2 8.8" stroke-width="0.6" opacity="0.8"/>
<path d="M110.2 39.8 l7.0 19.9" stroke-width="0.6" opacity="0.8"/>
<path d="M201.2 179.1 l8.5 -8.0" stroke-width="0.6" opacity="0.8"/>
<path d="M227.4 9.7 l-10.9 9.3" stroke-width="0.6" opacity="0.8"/>
<path d="M154.3 137.7 l13.8 7.1" stroke-width="0.6" opacity="0.8"/>
<path d="M253.6 147.6 l-10.7 19.1" stroke-width="0.6" opacity="0.8"/>
<path d="M170.9 72.1 l8.8 5.7" stroke-width="0.6" opacity="0.8"/>
<path d="M220.1 9.7 l16.9 -0.4" stroke-width="0.6" opacity="0.8"/>
<path d="M291.3 117.2 l-12.5 13.6" stroke-width="0.6" opacity="0.8"/>
<path d="M65.6 58.2 l2.8 12.8" stroke-width="0.6" opacity="0.8"/>
<path d="M14.1 97.7 l8.2 1.5" stroke-width="0.6" opacity="0.8"/>
<path d="M0.8 71.0 l12.7 8.9" stroke-width="0.6" opacity="0.8"/>
<path d="M122.3 60.2 l8.4 -14.5" stroke-width="0.6" opacity="0.8"/>
<path d="M140.6 26.9 l10.0 -10.2" stroke-width="0.6" opacity="0.8"/>
<path d="M18.8 28.9 l-6.4 9.8" stroke-width="0.6" opacity="0.8"/>
<path d="M3.4 129.0 l15.6 4.8" stroke-width="0.6" opacity="0.8"/>
<path d="M171.2 120.4 l11.2 2.5" stroke-width="0.6" opacity="0.8"/>
<path d="M267.4 8.8 l10.5 -1.5" stroke-width="0.6" opacity="0.8"/>
<path d="M47.1 182.3 l14.7 5.5" stroke-width="0.6" opacity="0.8"/>
<path d="M278.5 28.5 l10.7 -13.2" stroke-width="0.6" opacity="0.8"/>
<path d="M191.7 83.0 l12.3 -0.8" stroke-width="0.6" opacity="0.8"/>
<path d="M88.9 9.7 l0.5 8.1" stroke-width="0.6" opacity="0.8"/>
<path d="M250.0 149.0 l6.4 15.9" stroke-width="0.6" opacity="0.8"/>
<path d="M51.9 199.3 l-4.1 7.5" stroke-width="0.6" opacity="0.8"/>
<path d="M99.3 149.9 l-7.9 8.7" stroke-width="0.6" opacity="0.8"/>
<path d="M163.9 87.2 l11.5 4.0" stroke-width="0.6" opacity="0.8"/>
<path d="M274.9 178.8 l5.8 5.8" stroke-width="0.6" opacity="0.8"/>
<path d="M77.1 47.2 l14.4 -11.6" stroke-width="0.6" opacity="0.8"/>
</g>
<g fill="none" stroke="#f7cb66" stroke-width="1.05" stroke-linecap="round" stroke-linejoin="round">
<ellipse cx="130.5" cy="38.5" rx="26" ry="27.5"/><ellipse cx="131" cy="40" rx="12.5" ry="12" stroke-width="0.9"/>
<ellipse cx="126" cy="46" rx="60" ry="52"/>
<path d="M103 41 L67 55.5 L38.7 64.6 L0 77.5"/>
<path d="M103 28.4 L64.6 20.7 L0 5"/>
<path d="M108.5 18 L85 0"/>
<path d="M111 59.4 L100.7 94.3 L59.4 134.3 L0 191"/>
<path d="M100.7 94.3 L85 124 L56.8 180.8 L51.6 200"/>
<path d="M77.5 77.5 L46.5 108.5 L0 144.6"/>
<path d="M130.4 65.9 L129 103 L134 144.6 L121.4 200"/>
<path d="M134 144.6 L155 200"/>
<path d="M131.7 65.9 L144.6 108.5 L160 155 L160 200"/>
<path d="M152.4 55.5 L180.8 85.2 L234 98 L262 110 L281 122"/>
<path d="M155 44 L186 45.2 L234 25.8 L292 -2"/>
<path d="M153.7 51.6 L196.3 67 L234 85.2 L262 100 L282 108"/>
<path d="M152.4 23.2 L186 0"/>
<path d="M139.5 13 L144.6 0"/>
<path d="M124 11.6 L121.4 0"/>
<path d="M146 16 L170 0"/>
<path d="M0 111 L25.8 98 L49 75 L67 64.6"/>
<path d="M15.5 155 L51.6 144.6 L93 165.3 L129 167.9 L160 155 L180.8 134.3"/>
<path d="M38.7 124 L77.5 121.4 L108.5 134.3 L134.3 144.6"/>
<path d="M31 180.8 L77.5 167.9 L116.2 180.8 L155 186 L200 182"/>
<path d="M206.6 64.6 L204 116.2 L214.4 200"/>
<path d="M186 51.6 L206.6 64.6 L234 69.7 L262 72 L288 78"/>
<path d="M217 41.3 L206.6 64.6"/>
<path d="M0 43 L31 36 L62 31 L75 30"/>
<path d="M0 62 L30 58 L50 50 L67 40"/>
<path d="M10 96 L24 150 L30 166"/>
<path d="M0 120 L30 122"/>
<path d="M120 64 L112 92 L100.700 94.300"/>
<path d="M180 20 L200 54 L222 44"/>
<path d="M200 54 L236 60 L262 70"/>
<path d="M214 116 L240 104 L262 100"/>
<path d="M160 155 L196 150 L230 160 L252 160"/>
</g>
<g fill="none" stroke="#ebbfb0" stroke-width="1.7" stroke-linejoin="round"><path d="M292 46 L310 50 L324 42 L327 53 L311 58 L314 79 L328 76 L343 66 L360 74 L380 87 L381 93 L362 98 L366 109 L381 117 L379 137 L351 134 L347 110 L328 102 L303 106 L310 124"/></g>
<g fill="none" stroke="#8a8a8a" stroke-width="0.5" stroke-dasharray="3 2"><path d="M300 4 L312 14 L320 30 L324 42"/><path d="M381 93 L400 100 L430 110 L450 108 L468 112"/><path d="M322 176 L340 196"/><path d="M420 120 L426 150 L440 170 L436 200"/></g>
<g fill="none" stroke-linecap="round" stroke-linejoin="round">
<path d="M291 0 L291 26 L290 52 L288 78 L286.5 89 L282 106 L281 122" stroke="#ecbd3e" stroke-width="2"/>
<path d="M281 122 L285 133 L289.6 148 L290.4 162 L285 173 L275.7 184 L264.8 194.7 L260 200" stroke="#eaa24a" stroke-width="2.2"/>
<path d="M286.5 89 Q292 93 299 94.7 L310 94.7 L320 93.2 L328 93 Q340 90 347 87.5 Q358 84 366 85 Q376 86 381 88 Q392 92 403 94 Q412 97 420 96 Q432 92 440 89 Q452 85 468 85" stroke="#ecbd3e" stroke-width="2.1"/>
<path d="M281 122 L283.4 124 L302 135.8 L320 149.8 L340 172 L360 198" stroke="#ecbd3e" stroke-width="2.1"/>
<path d="M0 170 L12 192 L18 200" stroke="#ecbd3e" stroke-width="2.2"/>
<path d="M0 190 L8 186 L14 180" stroke="#ecbd3e" stroke-width="1.800"/>
</g>
</g>
<g font-family="'DejaVu Sans','Liberation Sans',sans-serif" filter="url(#halo)">
<text x="81.500" y="207.700" font-size="16.500" fill="#b9b9b9" letter-spacing="3.600">Москва</text>
<text x="107" y="45" font-size="11" fill="#3d3d3d" stroke="#3d3d3d" stroke-width="0.5" textLength="40" lengthAdjust="spacingAndGlyphs">Москва</text>
<text x="283" y="30" font-size="11" fill="#3d3d3d" stroke="#3d3d3d" stroke-width="0.5" textLength="37" lengthAdjust="spacingAndGlyphs">Реутов</text>
<text x="412" y="33" font-size="10.5" fill="#8a8a8a">Федурново</text>
<text x="411" y="73" font-size="10.5" fill="#8a8a8a" textLength="52" lengthAdjust="spacingAndGlyphs">Соболиха</text>
<text x="357.5" y="118" font-size="11.5" fill="#555" stroke="#555" stroke-width="0.15" textLength="60" lengthAdjust="spacingAndGlyphs">Марусино</text>
<text x="303" y="138" font-size="11" fill="#3d3d3d" stroke="#3d3d3d" stroke-width="0.5" textLength="51.5" lengthAdjust="spacingAndGlyphs">Люберцы</text>
<text x="273" y="159" font-size="11.5" fill="#555" stroke="#555" stroke-width="0.15" textLength="72" lengthAdjust="spacingAndGlyphs">Котельники</text>
<text x="363" y="164.5" font-size="11.5" fill="#555" stroke="#555" stroke-width="0.15" textLength="56" lengthAdjust="spacingAndGlyphs">Красково</text>
<text x="362" y="196" font-size="10.5" fill="#8a8a8a" textLength="45" lengthAdjust="spacingAndGlyphs">Пехорка</text>
<text x="256" y="200.5" font-size="11.5" fill="#555" stroke="#555" stroke-width="0.15" textLength="82" lengthAdjust="spacingAndGlyphs">Дзержинский</text>
<text x="439" y="198.5" font-size="11.5" fill="#3d3d3d" stroke="#3d3d3d" stroke-width="0.3">Быково</text>
<text x="455" y="167" font-size="10.5" fill="#8a8a8a">Островцы</text>
<text x="-28" y="173" font-size="10.5" fill="#8a8a8a">Внуково</text>
</g>
<path d="M226.5 91 L241 108 L255.5 91z" fill="#000" opacity="0.18" filter="url(#sh)" transform="translate(1.5 1.5)"/>
<path fill-rule="evenodd" fill="#6ab0e2" d="M241 69 a16 16 0 0 1 16 16 c0 6 -3.5 10.5 -7 14 L241 108 L232 99 c-3.500 -3.500 -7 -8 -7 -14 a16 16 0 0 1 16 -16z M241 79 a6 6 0 1 0 0.010 0z"/>
<g>
<circle cx="31" cy="32" r="15.5" fill="#000" opacity="0.25" filter="url(#sh)"/>
<circle cx="31" cy="71" r="15.5" fill="#000" opacity="0.25" filter="url(#sh)"/>
<circle cx="31" cy="31" r="15.4" fill="#fff"/><circle cx="31" cy="70" r="15.4" fill="#fff"/>
<g fill="none" stroke="#1a1a1a" stroke-width="2.100" stroke-linecap="round"><circle cx="29.700" cy="29.700" r="4.500"/><path d="M33.400 33.400 L37.300 37.300" stroke-width="2.500"/><path d="M27.400 29.700h4.600M29.700 27.400v4.600" stroke-width="1.900" stroke-linecap="butt"/>
<circle cx="29.700" cy="68.700" r="4.500"/><path d="M33.400 72.400 L37.300 76.300" stroke-width="2.500"/><path d="M27.400 68.700h4.600" stroke-width="1.900" stroke-linecap="butt"/></g>
</g>
</g></svg>
<div class="abs" style="left:842px;top:355px;width:281px;height:259px;border-left:1px solid #ddd;border-right:1px solid #ddd"></div>
<svg class="abs" style="left:843px;top:355px" width="279" height="83.500" viewBox="0 0 279 83.500" preserveAspectRatio="none">
<defs><clipPath id="pc"><rect width="279" height="83.500"/></clipPath><filter id="pb" x="-5%" y="-5%" width="110%" height="110%"><feGaussianBlur stdDeviation="0.650"/></filter>
<linearGradient id="gr" x1="0" y1="0" x2="1" y2="1"><stop offset="0" stop-color="#9a8562"/><stop offset="0.600" stop-color="#a58f6a"/><stop offset="1" stop-color="#b19b77"/></linearGradient>
<linearGradient id="lb" x1="0" y1="0" x2="1" y2="0"><stop offset="0" stop-color="#39443f"/><stop offset="0.600" stop-color="#3f4b45"/><stop offset="1" stop-color="#38433e"/></linearGradient>
<linearGradient id="rb" x1="0" y1="0" x2="1" y2="0"><stop offset="0" stop-color="#74776f"/><stop offset="0.060" stop-color="#43463f"/><stop offset="0.130" stop-color="#2c3a2b"/><stop offset="1" stop-color="#2b3b29"/></linearGradient>
<linearGradient id="fsh" x1="0" y1="0" x2="1" y2="0"><stop offset="0" stop-color="#000" stop-opacity="0.250"/><stop offset="0.250" stop-color="#000" stop-opacity="0"/><stop offset="0.750" stop-color="#000" stop-opacity="0"/><stop offset="1" stop-color="#000" stop-opacity="0.300"/></linearGradient>
<pattern id="fence" width="4.400" height="10" patternUnits="userSpaceOnUse"><rect width="4.400" height="10" fill="#bdbfbe"/><rect x="0" width="1.300" height="10" fill="#8d9191"/></pattern></defs>
<g clip-path="url(#pc)"><g filter="url(#pb)">
<rect x="-2" y="-2" width="283" height="88" fill="url(#gr)"/>
<g fill="#8d7856" opacity="0.550"><ellipse cx="228" cy="68.500" rx="9" ry="1.600"/><ellipse cx="150" cy="58" rx="5" ry="1.200"/><ellipse cx="212" cy="76" rx="4" ry="1"/><ellipse cx="156" cy="79" rx="6" ry="2"/><ellipse cx="245" cy="62" rx="7" ry="1.400"/></g>
<!-- far left -->
<rect x="-2" y="-2" width="6" height="58" fill="#3a2f2f"/><rect x="3.500" y="-2" width="8" height="42" fill="#5c5f5d"/><rect x="6" y="-2" width="1.200" height="40" fill="#8a8d8b"/><rect x="-2" y="38" width="14" height="20" fill="#4c4038"/>
<path d="M3 44 L11 46 L11 54 L4 53z" fill="#b8bcc0"/>
<path d="M-2 60.500 L13 61 L13.500 70.500 L-2 71z" fill="#e9e1dd"/><path d="M1 65 L11 66 L11 68.500 L1 68z" fill="#c98f88"/>
<!-- fence -->
<rect x="134" y="-2" width="33" height="41" fill="url(#fence)"/><rect x="134" y="-2" width="33" height="41" fill="url(#fsh)"/>
<rect x="136" y="38.500" width="30" height="4.400" fill="#8a5e48"/>
<rect x="136" y="42.900" width="31" height="8" fill="#8b7a60"/>
<path d="M141 37 L146 30 L152 31 L157 38.500 L142 38.500z" fill="#ecebee"/><path d="M140 43.500 L158 43 L156 50 L146 51 L140 50z" fill="#e4e3ea"/><path d="M144 45.500h8v1.500h-8z" fill="#99a"/>
<!-- left bin -->
<path d="M11.500 -2 L132 -2 L132.500 58 L130 63 L108 64.500 L101 70.500 L46 70.500 L40 62 L14 60.500 L12 40z" fill="url(#lb)"/>
<path d="M37 70 L108.500 70 L108.500 80 L37 80z" fill="#2a3430"/>
<path d="M14 60.500 L40 62 L46 70.500 L101 70.500 L108 64.500 L130 63" fill="none" stroke="#2c3632" stroke-width="1.400"/>
<path d="M13 57 L41 58.500 L47.500 66.500 L100 66.500 L106.500 60.500 L131 59" fill="none" stroke="#56635d" stroke-width="1"/>
<path d="M131.500 -2 L137 -2 L137 56 L132.500 60z" fill="#252b29"/><rect x="134" y="16" width="10.500" height="4" fill="#1c2120"/>
<rect x="25" y="9" width="15" height="2.400" fill="#75807a"/><rect x="104" y="7.500" width="13" height="2.200" fill="#717c76"/>
<rect x="15.500" y="-2" width="4.600" height="16" fill="#5e5148"/><rect x="117" y="-2" width="4.600" height="16" fill="#6b5a4c"/>
<path d="M45.600 -2 L85.700 -2 L86.800 6.500 L88 19.500 L89 30.400 L86.800 35.800 L85.700 43.400 L80.300 46.700 L76 52 L74.900 60.800 L65 64 L52 60.800 L43.400 54.300 L29.300 47.800 L27.100 41.200 L20.600 36.900 L15.700 29.300 L16.300 21.700 L25 14.100 L38 10.900 L42.300 6.500z" fill="#0b0b0b"/>
<path d="M28 36.500 L46 35.500 L46.500 50 L36 51.500 L29.500 47.500z" fill="#9c4a3e"/><path d="M31 37 L34.500 37 L35 46 L32 47z" fill="#e8e4e2"/><path d="M38 41 L44 40 L44 47 L39 48z" fill="#c9b58f"/>
<path d="M46.700 32.600 L60.800 27.100 L65 26 L67.300 35.800 L70.500 47.800 L60.800 52 L51 55.400 L45.600 48.800z" fill="#dcdcdf"/><path d="M52 36 L60 32 L64 44 L56 49z" fill="#c8c8cc"/>
<path d="M65 27 L76 28 L86.800 32.500 L86.800 43.400 L80.300 46.700 L71.600 46.700 L69.500 37z" fill="#141414"/>
<path d="M71.600 28 L80 27.500 L84.700 33 L78 37 L72 35z" fill="#e9e9ea"/><path d="M81 37.500 L86.800 37 L86.800 45 L82 45.600z" fill="#e3e3e4"/>
<path d="M54 52 L69 50.500 L75 52 L74.900 60.800 L65 64 L56 61z" fill="#a48b7b"/><path d="M62 55 L72 54 L73 60.500 L64 62.500z" fill="#e3d3c6"/><path d="M57 53.500 L62 53 L62 60 L58 60z" fill="#3a2a26"/>
<circle cx="118.800" cy="50" r="4" fill="#161b1a"/><circle cx="95" cy="11" r="1.500" fill="#2c3531"/><circle cx="96" cy="56.500" r="1.500" fill="#2c3531"/><circle cx="49" cy="66" r="1.200" fill="#2c3531"/>
<!-- wheels left bin -->
<path d="M16.300 67.300 L36.900 67.300 L36.900 76 L30 76 L22 73 L16.300 75z" fill="#b5bcc4"/><path d="M26 69 L37 68.500 L37 74 L28 75z" fill="#a38c5e"/>
<path d="M6.500 84 Q10 76 22 74.500 L34 75.500 L35.800 84z" fill="#2a2520"/>
<path d="M108.500 65 L128 65 L128 73.800 L118 74 L108.500 72z" fill="#b3bac2"/><path d="M108.500 67 L114 67 L114 72 L108.500 72z" fill="#a38c5e"/>
<path d="M115 84 Q116 74 126 72.700 Q135 74 135.700 84z" fill="#2a2220"/>
<!-- debris -->
<path d="M55.400 76 L69.500 76 L69.500 84 L55.400 84z" fill="#e6dada"/><path d="M56 78 L62 77.500 L62 84 L56 84z" fill="#7e2f3c"/>
<ellipse cx="100.500" cy="82" rx="3.800" ry="3" fill="#dcd5c8"/><ellipse cx="109.500" cy="80" rx="4.500" ry="4.600" fill="#d5cdc2"/><ellipse cx="109.500" cy="78" rx="3" ry="1.600" fill="#efe9e2"/>
<path d="M132 62 L140 60 L140 70 L133 71z" fill="#d7d3d6"/>
<path d="M140 68.400 L156 68 L159.500 72 L150 76 L140 75.500z" fill="#cdcfd8"/><path d="M143 70 L152 69.500 L153 72 L144 73z" fill="#b9a3b6"/>
<path d="M182 78.700 L193 79 L192 82.500 L183 82z" fill="#e6e4e0"/>
<path d="M143 53 L150 52 L151 55 L144 56z" fill="#d9cfb7"/>
<!-- right bin -->
<path d="M165.500 -2 L281 -2 L281 43.800 L192 43.400 L181 46.700 L175.800 43.400 L166 33.600z" fill="url(#rb)"/>
<path d="M166 33.600 L175.800 43.400 L181 46.700 L186 56 L176 50 L168 40z" fill="#1c1e1b"/>
<path d="M181 46.700 L192 43.400 L258.300 43.600 L262 50 L258.300 56.400 L192 56.400 L186 52z" fill="#141513"/>
<g stroke="#d5dbd3" stroke-width="0.900" opacity="0.650" stroke-linecap="round"><path d="M187 10 L186.600 16"/><path d="M227 14 L225 32"/><path d="M239.500 16 L238.500 27"/><path d="M249 18 L248.500 42"/><path d="M251.500 26 L250.500 36"/><path d="M231.500 35 L231.500 42"/><path d="M216 2 L215.500 8" opacity="0.500"/></g>
<circle cx="182.900" cy="58.600" r="10.300" fill="#1c1c1d"/><circle cx="181.500" cy="59.500" r="4.600" fill="#303133"/><path d="M181.800 46.700 L192 46.700 L191.500 57 L186.500 60.800 L182 58z" fill="#adb3b5"/><path d="M184 48 L187 48 L186.500 58 L184 57z" fill="#d3d7d8"/>
<circle cx="265.900" cy="59" r="9.800" fill="#1c1c1d"/><circle cx="264" cy="60" r="4.400" fill="#2e2f31"/><path d="M270 45 L276.500 45 L276 56 L272 58.600 L270 56z" fill="#b0b6b8"/><path d="M254 55.500 L262 55 L262 58 L254 58z" fill="#c9c6c0"/>
</g>
<text x="221.400" y="11.600" font-family="'Liberation Sans',sans-serif" font-size="8" font-weight="bold" fill="#c9cf5a" textLength="26" lengthAdjust="spacingAndGlyphs" opacity="0.850">43 43 ПН</text>
</g></svg>
<svg class="abs" style="left:843px;top:444px" width="137" height="128" viewBox="0 0 137 128">
<defs><filter id="db" x="-5%" y="-5%" width="110%" height="110%"><feGaussianBlur stdDeviation="0.350"/></filter></defs>
<rect width="137" height="128" fill="#fff"/>
<g filter="url(#db)">
<path d="M3.900 2v124" stroke="#e4e4e4" stroke-width="0.800" stroke-dasharray="5 4"/>
<path d="M136.300 1v126" stroke="#cfcfcf" stroke-width="0.900"/>
<!-- stamps -->
<g stroke="#3f9fda">
<circle cx="88.400" cy="14.800" r="11.400" stroke-width="1.300" fill="#7cc0ea" fill-opacity="0.320" stroke-opacity="0.800"/><circle cx="88.400" cy="14.800" r="7.600" stroke-width="0.800" fill="none" stroke-opacity="0.550"/>
<circle cx="40.400" cy="55.500" r="11" stroke-width="1.200" fill="#7cc0ea" fill-opacity="0.280" stroke-opacity="0.650"/><circle cx="40.400" cy="55.500" r="7.400" stroke-width="0.800" fill="none" stroke-opacity="0.450"/>
<circle cx="95.600" cy="54.600" r="15" stroke-width="0.900" fill="#7cc0ea" fill-opacity="0.070" stroke-opacity="0.220"/><circle cx="95.600" cy="54.600" r="10.500" stroke-width="0.700" fill="none" stroke-opacity="0.150"/>
<circle cx="31.400" cy="95.300" r="10.600" stroke-width="1.400" fill="#6ab6e6" fill-opacity="0.450" stroke-opacity="0.900"/><circle cx="31.400" cy="95.300" r="7" stroke-width="0.900" fill="none" stroke-opacity="0.650"/>
<circle cx="97.400" cy="94.400" r="13" stroke-width="1" fill="#7cc0ea" fill-opacity="0.140" stroke-opacity="0.420"/><circle cx="97.400" cy="94.400" r="9" stroke-width="0.700" fill="none" stroke-opacity="0.300"/>
</g>
<!-- hr lines -->
<g stroke="#9a9a9a" stroke-width="0.400">
<path d="M75 4.200h44M74 20h16M107 20h12"/><path d="M11.500 40.700h55M70.300 40.700h54.500"/><path d="M11.500 55.800h12M50 55.800h16M70.300 55.800h12M110 55.800h14"/>
<path d="M11.500 85h55M70.300 85h56"/><path d="M11.500 97h10M48 97h14M70.300 97h12M112 97h12"/><path d="M11.500 121.500h112"/>
</g>
<!-- text -->
<g font-family="'Liberation Serif',serif" fill="#2a2a2a" text-anchor="middle">
<text x="97" y="3" font-size="2.600" textLength="42">ООО «Спец-Лифт» Иванов Иванов</text>
<text x="97" y="6.600" font-size="1.800" textLength="40" fill="#666">(наименование должности руководителя объекта)</text>
<text x="115" y="13.600" font-size="2.600" textLength="16">Иванов А. Н.</text>
<text x="112" y="21" font-size="2.600" textLength="9">2022 г.</text>
<text x="40" y="33.400" font-size="2.800" textLength="21">СОГЛАСОВАНО</text>
<text x="39.500" y="36.600" font-size="2.700" textLength="48">Отдел по ВАО ГУ МЧС России по городу</text>
<text x="39.500" y="39.400" font-size="2.700" textLength="34">Москве и Московской области</text>
<text x="39" y="43" font-size="1.700" textLength="52" fill="#666">(наименование территориального органа безопасности)</text>
<text x="39" y="45" font-size="1.700" textLength="36" fill="#666">или руководитель подразделения</text>
<text x="97.500" y="33.400" font-size="2.800" textLength="21">СОГЛАСОВАНО</text>
<text x="97.500" y="37" font-size="2.700" textLength="30">ФГКУ «УВО ВНГ России</text>
<text x="97.500" y="39.600" font-size="2.700" textLength="18">по городу Москве»</text>
<text x="97.500" y="43.200" font-size="1.700" textLength="50" fill="#555">(руководитель территориального органа Росгвардии или</text>
<text x="97.500" y="45" font-size="1.700" textLength="50" fill="#555">подразделения вневедомственной охраны войск национальной</text>
<text x="97.500" y="46.800" font-size="1.700" textLength="46" fill="#555">гвардии Российской Федерации по месту нахождения)</text>
<text x="39.500" y="77.600" font-size="2.800" textLength="21">СОГЛАСОВАНО</text>
<text x="39" y="81" font-size="2.700" textLength="40">Главное управление МЧС России</text>
<text x="39" y="83.800" font-size="2.700" textLength="23">по городу Москве</text>
<text x="39" y="87.400" font-size="1.700" textLength="50" fill="#555">(руководитель территориального органа МЧС России либо</text>
<text x="39" y="89.200" font-size="1.700" textLength="44" fill="#555">уполномоченное им должностное лицо)</text>
<text x="97.500" y="76.400" font-size="2.800" textLength="21">СОГЛАСОВАНО</text>
<text x="97.500" y="79.400" font-size="2.700" textLength="48">Управа Донского района города Москвы</text>
<text x="98" y="87.400" font-size="1.700" textLength="50" fill="#555">(руководитель органа исполнительной власти субъекта</text>
<text x="98" y="89.200" font-size="1.700" textLength="44" fill="#555">Российской Федерации или лицо его замещающее)</text>
<text x="69.500" y="111" font-size="4.600" fill="#333" textLength="60">ПАСПОРТ БЕЗОПАСНОСТИ</text>
<text x="66.500" y="117.700" font-size="2.800" fill="#444" textLength="86">ОБЩЕСТВО С ОГРАНИЧЕННОЙ ОТВЕТСТВЕННОСТЬЮ</text>
<text x="68" y="120.600" font-size="2.800" fill="#444" textLength="89">«КОМПЛЕКСНАЯ ПОМОЩЬ МАЛОМУ БИЗНЕСУ»</text>
<text x="65" y="123.600" font-size="1.700" fill="#666" textLength="24">(наименование объекта)</text>
</g>
<!-- signatures / dates -->
<g fill="none" stroke="#4553b0" stroke-width="0.550" stroke-linecap="round" opacity="0.900">
<path d="M2.400 54 q2 -3 6 -2 q4 1 8 2 q3 -1 4 1 q4 -2 6 0 q4 -3 6 0 q4 -2 7 -1 q4 -2 6 0 q5 -2 8 -2 q3 0 6 -1"/>
<path d="M21 61.600 q3 -2 5 0 M28 61 l3 -1.500 M38 61.500 q3 -3 5 -1 M52 61 q4 -2 8 0"/>
<path d="M84 44 q3 6 1 12 q-2 3 -1 -4 q2 -6 3 2"/>
<path d="M98 55 q3 -4 4 -1 q2 -3 3 0 M109 54 q3 -4 5 -1 q2 -2 3 0 q3 -2 4 0 q3 -1 4 0 q2 -1 3 -0.500"/>
<path d="M78 61.500 q3 -2 5 0 q2 -2 4 0 M93 61 q3 -2 6 0 M106 61 q3 -3 6 -1 q2 -1 4 0"/>
<path d="M73 83.500 q2 -3 3 0 q2 -2 3 0 q2 -3 4 0 M85 83 q2 -3 3 0 q2 -3 4 0 q2 -2 3 0 q2 -2 3 0 M100 83 q2 -4 4 -1 q2 -2 3 0 q2 -2 4 0 q2 -2 3 0 M115 83 q2 -2 3 0 q2 -3 4 0 q2 -1 4 -0.500"/>
<path d="M22 92 v8 M25 91 v9 M28 92 v8 M22 99 h7 M33 98 q1 -4 2 0 M38 98 q3 -6 5 -2 q2 -3 3 0 q2 -3 3 0 q3 -3 5 -2 q3 -2 6 -2"/>
<path d="M22 103 q3 -2 5 0 M32 103 q2 -2 4 0 M46 102.600 q4 -3 8 0 q2 -1 4 0"/>
<path d="M75 99 q8 -2 14 -4 q8 -3 14 -3 M104 96 q1 -6 3 -2 q1 -4 3 0 M111 95 q3 -4 5 -1 q2 -3 3 0 q2 -2 3 0 q3 -2 4 -1"/>
<path d="M77 103 q3 -2 5 0 q2 -2 4 0 M92 102.600 q3 -2 6 0 M107 102.600 q3 -3 6 -1 q2 -1 4 0"/>
<path d="M87 6 q2 8 0 16 q-1 4 -1 -2 q1 -8 3 -2" stroke-width="0.700"/>
</g>
</g>
</svg>
<!-- pdf tile -->
<div class="abs" style="left:985px;top:444px;width:137px;height:128px;background:#f0f0f0"></div>
<svg class="abs" style="left:1012px;top:497px" width="28" height="28" viewBox="0 0 28 28"><g fill="#3a7ab9"><circle cx="11.800" cy="8.900" r="7.100"/><circle cx="20.400" cy="11.800" r="6"/><circle cx="4.850" cy="14.250" r="3.550"/><rect x="4.850" y="11" width="15.600" height="6.800"/></g><rect x="9.900" y="12.200" width="7.900" height="6" fill="#f0f0f0"/><path fill="#3a7ab9" d="M12.200 14.400h3.700v5.600h3.400L13.700 26.200 L8 20h4.200z"/></svg>
<div class="abs" style="left:1044px;top:493px;font-size:24px;line-height:28px;color:#3a7ab9;white-space:nowrap">PDF</div>
<div class="abs" style="left:853px;top:577px;font-size:14px;line-height:20px;color:#2b2b2b;white-space:nowrap">Заданию назначили организацию:<br>"Участок 1".</div>
<!-- reply arrow -->
<svg class="abs" style="left:1155.700px;top:535.700px" width="16" height="14" viewBox="0 0 16 14"><path fill="#6a6a6a" d="M9 1 L15.500 6.500 L9 12 L9 8.800 C5.500 8.600 2.800 9.800 0.800 13 C1 8 4 4.600 9 4.200z"/></svg>
<!-- paperclip -->
<svg class="abs" style="left:839.300px;top:612.700px" width="20" height="20" viewBox="0 0 20 20"><g transform="translate(9.800 10.400) rotate(-38)" fill="none" stroke="#3a7ec2" stroke-width="1.100" stroke-linecap="round"><path d="M-4.500 2.400 L6 2.400 A2.400 2.400 0 0 0 6 -2.400 L-6.500 -2.400 A1.750 1.750 0 0 0 -6.500 1.100 L4.500 1.100 A1.100 1.100 0 0 0 4.500 -1.100 L-3 -1.100"/></g></svg>
<!-- comment textarea -->
<div class="inp" style="left:842px;top:639px;width:468px;height:114px;line-height:20px;padding:6px 12px;color:#999;white-space:nowrap">Для отправки комментария нажмите Enter.<svg class="abs" style="right:0;bottom:0" width="11" height="11" viewBox="0 0 11 11"><path d="M10 3 L3 10 M10 7 L7 10" stroke="#555" stroke-width="1" fill="none"/></svg></div>

</div>
<div id="frame"></div>
</body>
</html>
